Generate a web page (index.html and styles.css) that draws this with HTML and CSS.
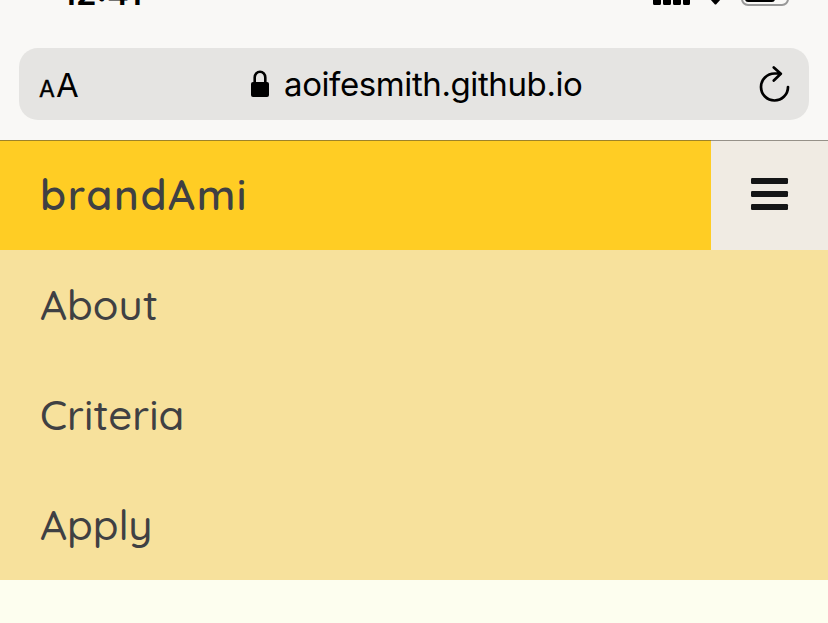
FILE: index.html
```html
<!DOCTYPE html>
<html lang="en">
<head>
<meta charset="utf-8">
<meta name="viewport" content="width=device-width, initial-scale=1">
<title>brandAmi</title>
<link rel="stylesheet" href="styles.css">
</head>
<body>
<div class="browser">
  <div class="status">
    <span class="time">12:41</span>
    <svg class="indicators" width="138" height="8" viewBox="0 0 138 8" aria-hidden="true">
      <path d="M1-4h8v7.500q0 1.500-1.500 1.500h-5q-1.500 0-1.500-1.500zM11-4h8v7.500q0 1.500-1.500 1.500h-5q-1.500 0-1.500-1.500zM21-4h8v7.500q0 1.500-1.500 1.500h-5q-1.500 0-1.500-1.500zM31-4h7v7.500q0 1.500-1.500 1.500h-4q-1.500 0-1.500-1.500z"/>
      <path d="M58-1h11l-4.500 5q-1 1-2 0z"/>
      <rect x="90" y="-16" width="46" height="21" rx="6" fill="none" stroke="#999" stroke-width="2"/>
      <rect x="93" y="-13" width="30" height="15" rx="3"/>
    </svg>
  </div>
  <div class="address">
    <span class="text-size"><span class="small">A</span><span class="large">A</span></span>
    <div class="site">
      <svg width="20" height="28" viewBox="0 0 20 28" aria-hidden="true">
        <path d="M4.700 13V7.500a5.300 5.800 0 0 1 10.600 0V13" fill="none" stroke="#000" stroke-width="2.600"/>
        <rect x="1" y="12" width="18" height="15" rx="2"/>
      </svg>
      <span class="url">aoifesmith.github.io</span>
    </div>
    <svg class="reload" width="34" height="38" viewBox="0 0 34 38" fill="none" stroke="#000" stroke-width="2.700" stroke-linecap="round" stroke-linejoin="round" aria-hidden="true">
      <path d="M31 22A13.500 13.500 0 1 1 17.500 8.500h6M16.800 2.500l7 6.300-7 6.700"/>
    </svg>
  </div>
</div>
<header class="bar">
  <a class="brand">brandAmi</a>
  <button class="toggle" aria-label="Menu">
    <svg width="38" height="34" viewBox="0 0 38 34" fill="#141516" aria-hidden="true">
      <rect x="0" y="1" width="37" height="6" rx="1.300"/>
      <rect x="0" y="14" width="37" height="6" rx="1.300"/>
      <rect x="0" y="27" width="37" height="6" rx="1.300"/>
    </svg>
  </button>
</header>
<nav class="menu">
  <a class="about">About</a>
  <a class="criteria">Criteria</a>
  <a class="apply">Apply</a>
</nav>
</body>
</html>
```
FILE: styles.css
```css
* { box-sizing: border-box; }
body {
  margin: 0;
  height: 623px;
  overflow: hidden;
  background: #fdfeef;
  color: #3f4043;
  font-family: Quicksand, Inter, sans-serif;
  font-feature-settings: "cv11" 1;
}
.browser {
  height: 140px;
  background: #f9f8f6;
  color: #000;
  font-family: Inter, sans-serif;
  font-feature-settings: normal;
}
.status {
  height: 48px;
  display: flex;
  justify-content: space-between;
  align-items: flex-start;
  padding: 0 38px 0 62px;
  overflow: hidden;
}
.time {
  font-size: 33px;
  font-weight: 600;
  line-height: 40px;
  margin-top: -27px;
  letter-spacing: 0;
}
.address {
  height: 72px;
  margin: 0 19px;
  padding: 0 18px 0 20px;
  border-radius: 19px;
  background: #e5e4e2;
  display: flex;
  align-items: center;
}
.text-size {
  display: flex;
  align-items: baseline;
  gap: 1px;
  padding-top: 2px;
  width: 210px;
}
.small { font-size: 23px; -webkit-text-stroke: 0.4px #000; }
.large { font-size: 33px; line-height: 40px; }
.site {
  flex: 1;
  display: flex;
  align-items: center;
  gap: 14px;
  padding-left: 1px;
}
.url {
  font-size: 33px;
  line-height: 40px;
  letter-spacing: -0.4px;
  white-space: nowrap;
}
.bar {
  height: 110px;
  display: flex;
  background: #ffcd24;
}
.brand,
.toggle {
  border: 0;
  border-top: 1px solid rgba(60, 55, 45, 0.5);
}
.brand {
  flex: 1;
  padding-left: 40px;
  font-size: 42px;
  font-weight: 600;
  line-height: 107px;
  letter-spacing: 1.6px;
}
.toggle {
  width: 117px;
  padding: 0 0 3px;
  border-radius: 0;
  background: #f0ebe3;
  display: flex;
  align-items: center;
  justify-content: center;
}
.menu {
  height: 330px;
  background: #f7e19c;
  display: flex;
  flex-direction: column;
}
.menu a {
  height: 110px;
  padding-left: 40px;
  font-size: 42px;
  font-weight: 500;
  line-height: 109px;
}
```
